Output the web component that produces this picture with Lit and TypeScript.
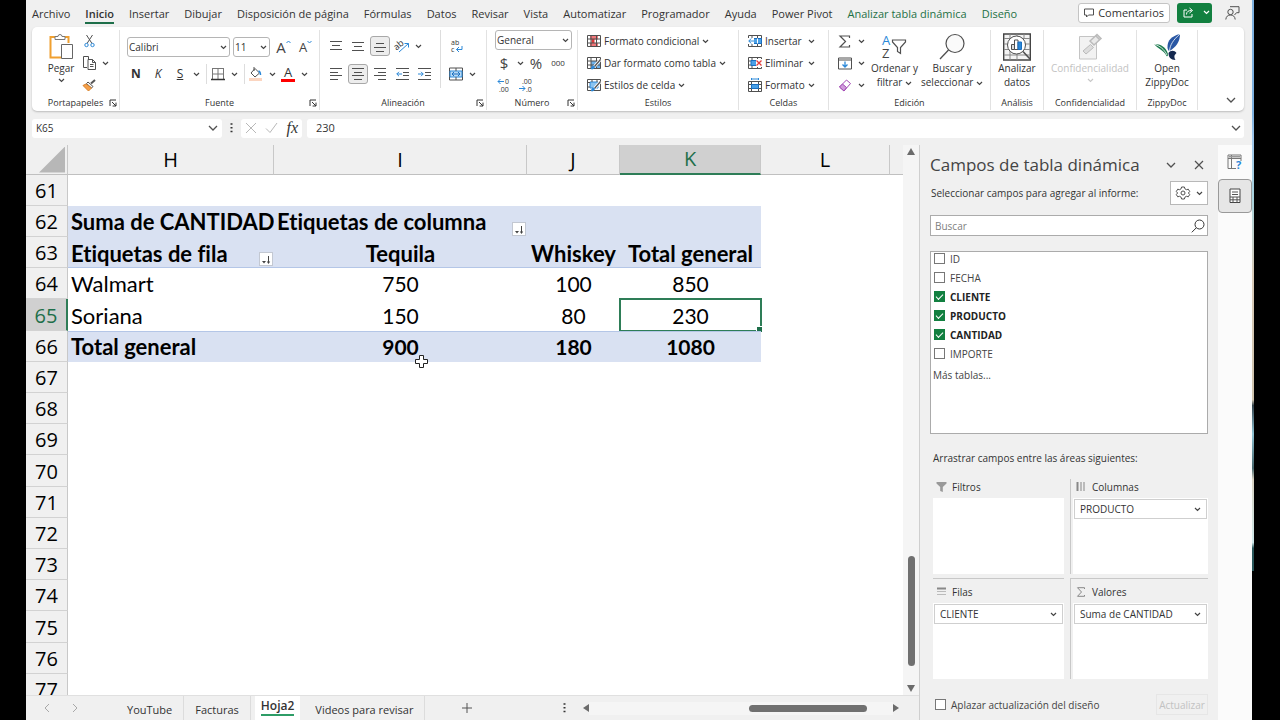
import { LitElement, html, svg, css, nothing } from "lit";
import { customElement, state } from "lit/decorators.js";
import { classMap } from "lit/directives/class-map.js";

const icon = (w: number, h: number, body: unknown) =>
  html`<svg class="icon" width=${w} height=${h} viewBox="0 0 ${w} ${h}" fill="none" stroke="#505050" stroke-width="1" aria-hidden="true">${body}</svg>`;

const chevron = (extra = "") =>
  html`<svg class="chev ${extra}" width="7" height="5" viewBox="0 0 7 5" fill="none" stroke="#444" stroke-width="1.2" aria-hidden="true"><path d="M1 1l2.500 2.500L6 1" /></svg>`;
const chev = chevron();
const wideChev = icon(10, 6, svg`<path d="M1 1l4 4 4-4" stroke-width="1.3" />`);
const launcher = icon(8, 8, svg`<path d="M1 7V1h6M3 3l4 4M7 3.600V7H3.600" stroke="#333" />`);

const lines = (rows: Array<[number, number, number]>) =>
  svg`${rows.map(([x1, x2, y]) => svg`<path d="M${x1} ${y}H${x2}" />`)}`;

const gridLines = svg`<path d="M.5 1.500h13v11H.5zM.5 5h13M.5 9h13M4 1.500v11M9.500 1.500v11" />`;

const I = {
  paste: icon(26, 28, svg`<path d="M7 4H2.500v20.500H13" stroke="#f0a030" stroke-width="2"/><path d="M17 4h3.500v6" stroke="#f0a030" stroke-width="2"/><path d="M7 6.500V3.500h3a2 2 0 0 1 4 0h3v3z" stroke="#777" fill="#fff"/><path d="M13.500 11.500h11v14h-11z" stroke="#666" fill="#fff"/>`),
  cut: icon(11, 14, svg`<path d="M2.500 1l5.500 8.500M8.500 1L3 9.500" /><circle cx="2.500" cy="11" r="1.700" stroke="#2b88d8"/><circle cx="8.500" cy="11" r="1.700" stroke="#2b88d8"/>`),
  copy: icon(15, 14, svg`<path d="M5 11.500H1.500v-11h5V3" /><path d="M6 3.500h4.500l3 3v7H6z" fill="#fff"/><path d="M10.500 3.500v3h3M8 8.500h3.500M8 10.500h3.500"/>`),
  painter: icon(14, 13, svg`<path d="M13 1L9 4.500" stroke="#555" stroke-width="2"/><path d="M6 3l5 4.500-1.500 1.500L4.500 4.500z" fill="#fff"/><path d="M4 5L1 6.500 6.500 12l3-3z" fill="#f5a04a" stroke="#d9822b"/>`),
  borders: icon(14, 14, svg`<path d="M1 1.500h12M1 7h12M1.500 1v11M7 1v11M12.500 1v11" stroke="#777"/><path d="M0 12.500h14" stroke="#333" stroke-width="1.500"/>`),
  fill: icon(14, 14, svg`<path d="M6 1.500L10.500 6 6 10 2 6zM5 0v4" /><path d="M9.500 4c2 .5 2 2 2 4" stroke="#2b88d8" stroke-width="1.500"/><path d="M0 12.500h13" stroke="#fbd5c0" stroke-width="3"/>`),
  caretUp: svg`<path d="M.5 3l2-2 2 2" />`,
  caretDown: svg`<path d="M.5 1l2 2 2-2" />`,
  top: icon(12, 10, lines([[0, 12, 0.5], [2, 10, 4.5], [0, 12, 8.5]])),
  mid: icon(12, 10, lines([[0, 12, 1.5], [2, 10, 5.5], [0, 12, 9.5]])),
  bottom: icon(12, 12, lines([[2, 10, 3.5], [0, 12, 7.5], [2, 10, 11.5]])),
  left: icon(12, 12, lines([[0, 12, 0.5], [0, 8, 4.5], [0, 12, 7.5], [0, 8, 11.5]])),
  center: icon(12, 12, lines([[0, 12, 0.5], [2, 10, 4.5], [0, 12, 7.5], [2, 10, 11.5]])),
  right: icon(12, 12, lines([[0, 12, 0.5], [4, 12, 4.5], [0, 12, 7.5], [4, 12, 11.5]])),
  outdent: icon(13, 12, svg`${lines([[0, 13, 0.5], [7, 13, 4.5], [7, 13, 7.5], [0, 13, 11.5]])}<path d="M6 6H.8M3 3.800L.8 6 3 8.200" stroke="#2b88d8" />`),
  indent: icon(13, 12, svg`${lines([[0, 13, 0.5], [7, 13, 4.5], [7, 13, 7.5], [0, 13, 11.5]])}<path d="M0 6h5.200M3 3.800L5.200 6 3 8.200" stroke="#2b88d8" />`),
  orient: icon(15, 14, svg`<text x="-1" y="9" class="tiny large" transform="rotate(-40 4 7)">ab</text><path d="M4 13L13.500 4.500M9.500 4.500h4v4" stroke="#2b88d8"/>`),
  wrap: icon(13, 14, svg`<text x="1" y="6" class="tiny">ab</text><text x="1" y="13" class="tiny">c</text><path d="M12 7v3.500H6.500M9 8l-2.500 2.500L9 13" stroke="#2b88d8"/>`),
  merge: icon(14, 14, svg`<path d="M.5 1h13v12H.5z"/><path d="M1 4h12v6H1z" fill="#b9d9f3" stroke="#2b88d8"/><path d="M3 7h8M5 5L3 7l2 2M9 5l2 2-2 2" stroke="#1a6fc0"/><path d="M7 1v3M7 10v3"/>`),
  lessDec: icon(14, 14, svg`<path d="M7 3.500H1M3.500 1L1 3.500 3.500 6" stroke="#2b88d8"/><text x="8" y="6" class="tiny">0</text><text x="2" y="14" class="tiny">.00</text>`),
  moreDec: icon(14, 14, svg`<text x="3" y="6" class="tiny">.00</text><path d="M0 10.500h6M3.500 8L6 10.500 3.500 13" stroke="#2b88d8"/><text x="7" y="14" class="tiny">.0</text>`),
  cond: icon(14, 14, svg`<path d="M3 1.500h8v4H3zM3 9h8v3.500H3z" fill="#f2777a" stroke="none"/><path d="M4.500 5h3v4h-3z" fill="#e23b3b" stroke="none"/>${gridLines}`),
  asTable: icon(14, 14, svg`<path d="M4 5h9.500v7.500H4z" fill="#6fb1e8" stroke="none"/>${gridLines}<path d="M13.500 3.500L7 11" stroke="#fff" stroke-width="3"/><path d="M13.500 3.500L7.500 10.500" stroke="#555" stroke-width="1.300"/><path d="M4.500 13c0-2 1-3 2.500-3 1 1.500-.5 3-2.500 3z" fill="#2b88d8" stroke="#2b88d8"/>`),
  cellStyle: icon(14, 14, svg`<path d="M.5 1.500h13v11H.5z"/><path d="M3 4h8v6H3z" fill="#8cc4f0" stroke="#2b88d8"/><path d="M.5 4.500H3M.5 9H3M5 1.500V4M10 1.500V4"/><path d="M13.500 3.500L7 11" stroke="#fff" stroke-width="3"/><path d="M13.500 3.500L7.500 10.500" stroke="#555" stroke-width="1.300"/><path d="M4.500 13c0-2 1-3 2.500-3 1 1.500-.5 3-2.500 3z" fill="#2b88d8" stroke="#2b88d8"/>`),
  insert: icon(14, 14, svg`${gridLines}<path d="M5 4.500h8.500v5H5z" fill="#4aa0e6" stroke="#1a6fc0"/><path d="M9.500 4.500v5" stroke="#fff"/><path d="M0 4h6v6H0z" fill="#fff" stroke="none"/><path d="M6 7H.8M3.200 4.500L.8 7l2.400 2.500" stroke="#2b88d8"/>`),
  del: icon(14, 14, svg`${gridLines}<path d="M3 4.500h6v5H3z" fill="#4aa0e6" stroke="#1a6fc0"/><path d="M8 3h6v8H8z" fill="#fff" stroke="none"/><path d="M8.500 4.500l5 5M13.500 4.500l-5 5" stroke="#e23b3b" stroke-width="1.300"/>`),
  format: icon(14, 14, svg`<path d="M.5 3.500h13v10H.5zM.5 6.500h13M.5 10.500h13M3.500 3.500v10M10.500 3.500v10"/><path d="M3.500 6.500h7v4h-7z" fill="#4aa0e6" stroke="#1a6fc0"/><path d="M3.500 1h7M3.500 0v2M10.500 0v2" stroke="#2b88d8"/>`),
  sum: icon(14, 13, svg`<path d="M11.500 3V1H2L7.500 6.500 2 12h9.500v-2" stroke-width="1.200"/>`),
  fillDown: icon(14, 13, svg`<path d="M.5 1h13v11H.5zM.5 3h13"/><path d="M7 4.500v5.500M4.500 7.500L7 10l2.500-2.500" stroke="#2b88d8" stroke-width="1.300"/>`),
  erase: icon(14, 13, svg`<path d="M8.500 1l4 3.500-6.500 7.500-4.500-4z" stroke="#a349b5" fill="#fff"/><path d="M4.500 5L8.500 8.500 6 12 1.500 8z" stroke="#a349b5" fill="#cf9bdb"/>`),
  sort: icon(26, 28, svg`<text x="1" y="12" class="az blue">A</text><text x="1" y="25" class="az">Z</text><path d="M11.500 7h13v2l-5 5.500v6l-3-2v-4l-5-5.500z" stroke-width="1.200"/>`),
  find: icon(26, 28, svg`<circle cx="16" cy="10.500" r="9" fill="#fafafa" stroke-width="1.200"/><path d="M9.500 17L1 26" stroke-width="1.300"/>`),
  analyze: icon(28, 28, svg`<path d="M.7 1h26.600v26H.7z" stroke="#444" stroke-width="1.400" fill="#f4f4f4"/><path d="M1 5.500h26M1 11h26M1 16.500h26M1 22h26M7 16v11M14 20v7M21 1v4M7 1v4M14 1v4" stroke="#888"/><circle cx="13.500" cy="12" r="9" fill="#fff"/><path d="M20 18.500L27 26" stroke-width="1.600"/><path d="M8.500 11.500h3v5h-3z" fill="#ddd"/><path d="M11.500 7h3.500v9.500h-3.500z" fill="#fff"/><path d="M15 9h3.500v7.500H15z" fill="#2b88d8" stroke="#1a6fc0"/>`),
  confid: icon(26, 28, svg`<path d="M2.500 3.500H19.500v22.500H2.500z" stroke="#c4c4c4" fill="#f2f2f2"/><path d="M6 18l7.500-6.500 3 3L9 21z" fill="#ddd" stroke="#bbb"/><path d="M13 8l7-6.500 4 4-7 6.500zM19 3l3.500 3.500" stroke="#bbb" fill="#e9e9e9" stroke-width="1.500"/>`),
  zippy: icon(28, 28, svg`<path d="M27 1C19 3 14 7 14.500 15c.5 2 1 3 2 3C23 14 27 9 27 1z" fill="#2957a4" stroke="none"/><path d="M16.500 18C17 12 20 7 27 1" stroke="#fff" stroke-width=".8"/><path d="M1 11c7 0 12 3 14 10 0 2-.5 2.500-1.500 2C11 17 6 17 1 11z" fill="#1e7c50" stroke="none"/><path d="M1 11c6 2 10 5 13 11" stroke="#fff" stroke-width=".8"/><path d="M15.500 20c2-3 6-3 8 0-2 2-3 3-1 7-5 0-7-3-7-7z" fill="#14284f" stroke="none"/>`),
  comment: icon(10, 10, svg`<path d="M.5 1h9v6H4.500l-2 2V7h-2z"/>`),
  share: icon(12, 11, svg`<path d="M4 3H1v7h8V7M3.500 7.500c0-3 2-4 5-4M6.500 1L9.500 3.500 6.500 6" stroke="#fff"/>`),
  person: icon(15, 14, svg`<path d="M5 .7h9v6h-2.500L9.500 9"/><circle cx="5.500" cy="6" r="2.700" fill="#f0f0f0"/><path d="M.8 13.500c.3-3 2-4.500 4.700-4.500s4.400 1.500 4.700 4.500"/>`),
  cancel: icon(12, 12, svg`<path d="M1 1l10 10M11 1L1 11" stroke="#b8b8b8"/>`),
  accept: icon(13, 12, svg`<path d="M1 6.500l4 4L12 1" stroke="#b8b8b8"/>`),
  dots: icon(3, 10, svg`<path d="M.5 1h2M.5 4.800h2M.5 8.500h2" stroke="#333" stroke-width="1.500"/>`),
  close: icon(10, 10, svg`<path d="M1 1l8 8M9 1L1 9" stroke-width="1.200"/>`),
  gear: icon(14, 14, svg`<path d="M5.600 1h2.800l.5 1.800 1.600.9 1.800-.5 1.400 2.300L12.400 7l1.300 1.500-1.400 2.300-1.800-.5-1.600.9-.5 1.800H5.600l-.5-1.800-1.600-.9-1.800.5L.3 8.500 1.600 7 .3 5.500l1.400-2.300 1.800.5 1.600-.9z"/><circle cx="7" cy="7" r="2"/>`),
  search: icon(14, 14, svg`<circle cx="8.500" cy="5.500" r="4.500" stroke="#333"/><path d="M5.300 8.800L.8 13.300" stroke="#333"/>`),
  funnel: icon(11, 10, svg`<path d="M.5 0h10v1.500L6.800 5v5l-2.600-1V5L.5 1.500z" fill="#999" stroke="none"/>`),
  cols: icon(11, 10, svg`<path d="M1.500 0v9" stroke="#888" stroke-width="2"/><path d="M5 0v9M8 0v9" stroke="#bbb" stroke-width="2"/>`),
  rows: icon(11, 10, svg`<path d="M1 1.500h9" stroke="#888" stroke-width="2"/><path d="M1 4.500h9M1 7.500h9" stroke="#bbb"/>`),
  sigma: icon(11, 10, svg`<path d="M8.500 2V.7h-7L5.500 5l-4 4.300h7V8" stroke="#888"/>`),
  help: icon(16, 16, svg`<path d="M1 1h13v6M9 14.500H1V1M1 4.500h13M4.500 1v13" stroke="#777"/><path d="M2 2h11v1.500H2z" fill="#999" stroke="none"/><text x="9" y="15" class="q">?</text>`),
  fields: icon(12, 16, svg`<path d="M1 1h10v13.500H1z" stroke="#444" fill="#fff"/><path d="M3 4h6M3 6.500h6M1 9h10M1 11.800h10M4 9v5.500M8 9v5.500" stroke="#555"/>`),
  sorted: icon(11, 11, svg`<path d="M7.500 2v7" stroke="#444"/><path d="M5.800 7.500h3.400L7.500 10z M1 7h4L3 9.500z" fill="#444" stroke="none"/>`),
  up: icon(8, 7, svg`<path d="M4 0l4 7H0z" fill="#6b6b6b" stroke="none"/>`),
  down: icon(8, 7, svg`<path d="M4 7l4-7H0z" fill="#6b6b6b" stroke="none"/>`),
  prev: icon(6, 8, svg`<path d="M0 4l6-4v8z" fill="#6b6b6b" stroke="none"/>`),
  next: icon(6, 8, svg`<path d="M6 4L0 0v8z" fill="#6b6b6b" stroke="none"/>`),
  navL: icon(6, 10, svg`<path d="M5 1L1 5l4 4" stroke="#a8a8a8"/>`),
  navR: icon(6, 10, svg`<path d="M1 1l4 4-4 4" stroke="#a8a8a8"/>`),
  plus: icon(10, 10, svg`<path d="M5 0v10M0 5h10" stroke="#555"/>`),
  cursor: icon(13, 13, svg`<path d="M4.500.5h4v4h4v4h-4v4h-4v-4h-4v-4h4z" fill="#fff" stroke="#222"/>`),
};

const TABS = ["Archivo", "Inicio", "Insertar", "Dibujar", "Disposición de página", "Fórmulas", "Datos", "Revisar", "Vista", "Automatizar", "Programador", "Ayuda", "Power Pivot", "Analizar tabla dinámica", "Diseño"];

type Row = { n: number; kind?: string; cells?: string[] };
const ROWS: Row[] = [
  { n: 61 },
  { n: 62, kind: "head", cells: ["Suma de CANTIDAD", "Etiquetas de columna", "", ""] },
  { n: 63, kind: "head line", cells: ["Etiquetas de fila", "Tequila", "Whiskey", "Total general"] },
  { n: 64, cells: ["Walmart", "750", "100", "850"] },
  { n: 65, cells: ["Soriana", "150", "80", "230"] },
  { n: 66, kind: "head total", cells: ["Total general", "900", "180", "1080"] },
  ...Array.from({ length: 11 }, (_, i) => ({ n: 67 + i })),
];

@customElement("app-root")
export class AppRoot extends LitElement {
  @state() private tab = "Inicio";
  @state() private fields = [
    { name: "ID", on: false },
    { name: "FECHA", on: false },
    { name: "CLIENTE", on: true },
    { name: "PRODUCTO", on: true },
    { name: "CANTIDAD", on: true },
    { name: "IMPORTE", on: false },
  ];

  static styles = css`
    :host { display: block; font-family: "Open Sans", "Noto Sans", sans-serif; font-size: 11px; line-height: 14px; color: #333; }
    * { box-sizing: border-box; }
    button, input, select { font: inherit; color: inherit; margin: 0; padding: 0; border: 0; background: none; border-radius: 0; }
    select { appearance: none; text-overflow: ellipsis; }
    svg { display: block; flex: none; overflow: visible; }
    .tiny { font: 7px "Open Sans", sans-serif; fill: #333; stroke: none; }
    .tiny.large { font-size: 9px; }
    .az { font: 13px "Open Sans", sans-serif; fill: #444; stroke: none; }
    .az.blue { fill: #2b88d8; }
    .q { font: bold 11px "Open Sans", sans-serif; fill: #2b88d8; stroke: none; }
    .screen { height: 100vh; display: flex; background: #000; padding: 0 26px; overflow: hidden; }
    .app { flex: 1; min-width: 0; display: flex; flex-direction: column; background: #f0f0f0; }
    .edge { width: 2px; height: 571px; background: linear-gradient(#7fb2e0 0 20%, #9fc6ea 24%, #a9d3dc 35%, #d9cbb8 48%, #cfc4ae 70%, #33434c 71%, #8fc3d4 76%, #47676d 82%, #d8d2c2 84%, #cfe8ea 95%, #28565a 96%); }

    .top { flex: none; height: 27px; display: flex; align-items: center; justify-content: space-between; padding: 0 12px 0 6px; }
    .tabs { display: flex; gap: 15px; }
    .tab { height: 18px; margin-top: 2px; border-bottom: 2px solid transparent; white-space: nowrap; }
    .tab.on { font-weight: 600; border-color: #1e6f4a; }
    .tab.ctx { color: #1e7145; }
    .actions { display: flex; align-items: center; gap: 7px; margin-bottom: 2px; }
    .comments { display: flex; align-items: center; gap: 4px; height: 20px; padding: 0 5px; background: #fff; border: 1px solid #c4c4c4; border-radius: 3px; }
    .share { display: flex; align-items: center; gap: 8px; width: 35px; height: 20px; padding-left: 6px; background: #128040; border-radius: 3px; margin-right: 6px; }
    .share .chev { stroke: #fff; }

    .ribbon { flex: none; height: 84px; margin: 0 8px 0 6px; background: #fff; border-radius: 5px; box-shadow: 0 1px 2px #bbb; display: flex; }
    .group { flex: none; display: flex; flex-direction: column; border-right: 1px solid #e2e2e2; margin: 3px 0 1px; }
    .body { height: 66px; display: flex; }
    .caption { display: flex; align-items: center; justify-content: center; height: 14px; font-size: 9px; position: relative; white-space: nowrap; }
    .launch { position: absolute; right: 2px; top: 3px; }
    .w-clip { width: 88px; } .w-font { width: 200px; } .w-align { width: 167px; } .w-num { width: 91px; } .w-style { width: 161px; }
    .w-cells { width: 90px; } .w-edit { width: 162px; } .w-an { width: 53px; } .w-conf { width: 93px; } .w-zip { width: 61px; }
    .collapse { margin: auto 8px 8px auto; }
    .col { display: flex; flex-direction: column; }
    .row { display: flex; align-items: center; }
    .big { display: flex; flex-direction: column; align-items: center; font-size: 10px; line-height: 14px; padding-top: 3px; white-space: nowrap; }
    .big .chev { display: inline-block; margin-left: 3px; vertical-align: middle; }
    .big .chev.solo { margin: 3px 0 0; }
    .big.off { color: #c3c3c3; }
    .big.off .chev { stroke: #c8c8c8; }
    .big.fillw { width: 100%; }
    .paste { width: 34px; margin-left: 12px; }
    .tools { padding-top: 1px; gap: 2px; }
    .sortb { margin-left: 6px; }
    .findb { margin-left: 3px; }
    .b { display: flex; align-items: center; justify-content: center; width: 22px; height: 20px; }
    .b.on { background: #ededed; border: 1px solid #a8a8a8; border-radius: 3px; width: 20px; margin: 0 1px; }
    .c { display: flex; align-items: center; justify-content: center; width: 10px; height: 20px; }
    .combo { position: relative; display: block; height: 20px; }
    .combo select { width: 100%; height: 100%; border: 1px solid #b5b5b5; border-radius: 3px; padding: 0 12px 0 1px; font-size: 10px; background: #fff; }
    .combo .chev { position: absolute; right: 3px; top: 8px; pointer-events: none; }
    .combo.name { width: 103px; } .combo.size { width: 37px; margin-left: 3px; } .combo.fmt { width: 77px; margin-bottom: 2px; }
    .vr { width: 1px; height: 20px; background: #ddd; margin-left: 5px; }
    .font { padding: 7px 0 0 7px; gap: 7px; }
    .second { margin-left: -2px; }
    .align { padding: 6px 0 0 5px; gap: 8px; }
    .wrapcol { padding: 6px 0 0 4px; margin-left: 5px; gap: 8px; border-left: 1px solid #ddd; height: 58px; }
    .num { padding: 0 0 0 8px; }
    .num .row { margin-left: -2px; height: 22px; }
    .list { padding: 1px 0 0 9px; gap: 2px; }
    .item { display: flex; align-items: center; gap: 3px; height: 20px; font-size: 10px; white-space: nowrap; }
    .item.fix { width: 67px; }
    .item.sym { gap: 6px; }
    .item .chev.end { margin-left: auto; }
    .glyph { font-size: 15px; color: #444; }
    .bold { font-weight: 700; font-size: 12px; } .ital { font-style: italic; font-size: 12px; } .under { text-decoration: underline; font-size: 12px; }
    .fontA { font-size: 15px; color: #444; position: relative; }
    .fontA.small { font-size: 13px; }
    .fontA svg { position: absolute; top: 0; right: -5px; }
    .fontcolor { font-size: 13px; line-height: 13px; border-bottom: 3px solid #f00; width: 14px; text-align: center; }
    .zeros { font-size: 8px; }

    .fbar { flex: none; display: flex; align-items: center; height: 34px; padding: 0 8px 0 6px; }
    .fbar > * { height: 19px; }
    .namebox { width: 190px; display: flex; align-items: center; background: #fff; border-radius: 3px; padding: 0 4px; }
    .namebox input { flex: 1; min-width: 0; font-size: 10px; }
    .fbar .grip { width: 19px; display: flex; align-items: center; justify-content: center; }
    .fx { width: 61px; background: #fff; border-radius: 3px; display: flex; align-items: center; justify-content: space-between; padding: 0 4px; font: italic 16px/18px "Liberation Serif", serif; }
    .formula { flex: 1; margin-left: 5px; background: #fff; border-radius: 3px; display: flex; align-items: center; padding: 0 3px 0 9px; }
    .formula input { flex: 1; min-width: 0; }

    .main { flex: 1; min-height: 0; display: flex; }
    .left { flex: 1; min-width: 0; display: flex; flex-direction: column; border-right: 1px solid #cfcfcf; }
    .view { flex: 1; min-height: 0; display: flex; }
    .sheet { flex: 1; min-width: 0; overflow: hidden; background: #fff; }
    table { border-collapse: separate; border-spacing: 0; table-layout: fixed; width: 100%; font: 22px/24px Lato, "Open Sans", sans-serif; font-variant-ligatures: none; color: #000; }
    .c0 { width: 42px; } .cH { width: 206px; } .cI { width: 253px; } .cJ { width: 93px; } .cK { width: 141px; } .cL { width: 129px; }
    th, td { padding: 0; height: 31px; text-align: center; white-space: nowrap; font-weight: 400; }
    thead th { height: 30px; background: #f0f0f0; border-right: 1px solid #c8c8c8; border-bottom: 1px solid #c0c0c0; font-family: "Open Sans", sans-serif; font-size: 20px; }
    thead th:last-child { border-right: 0; }
    thead th.sel { background: #d0d0d0; color: #1e6f4a; border-bottom: 2px solid #2e7d57; }
    .corner { display: block; width: 26px; height: 26px; margin-left: auto; margin-right: 2px; background: #b7b7b7; clip-path: polygon(100% 0, 100% 100%, 0 100%); }
    tbody th { background: #f0f0f0; border-right: 1px solid #c8c8c8; border-bottom: 1px solid #d2d2d2; font-family: "Open Sans", sans-serif; font-size: 20px; padding-top: 2px; }
    tbody tr:nth-child(5n) > * { height: 32px; }
    tbody th.sel { background: #d0d0d0; color: #1e6f4a; border-right: 2px solid #2e7d57; }
    td { position: relative; padding-top: 1px; }
    td.txt { text-align: left; padding-left: 3px; }
    td.numeric { font-size: 21px; }
    .head td { font-weight: 700; }
    .head td:not(.rest) { background: #d9e1f2; }
    .line td:not(.rest) { border-bottom: 1px solid #b4c6e7; padding-top: 3px; }
    .total td:not(.rest) { border-top: 1px solid #b4c6e7; padding-top: 0; }
    td.cell { outline: 2px solid #2e7d57; outline-offset: -1px; }
    td.cell::after { content: ""; position: absolute; right: -2px; bottom: -2px; width: 5px; height: 5px; background: #1e6f4a; border: 1px solid #fff; }
    .sortbtn { position: absolute; right: 1px; bottom: 1px; width: 14px; height: 14px; background: #fff; border: 1px solid #c3c8d2; display: flex; align-items: center; justify-content: center; }
    .cursor { position: absolute; left: 141px; top: 23px; z-index: 1; }
    .vscroll { width: 16px; background: #f5f5f5; display: flex; flex-direction: column; align-items: center; padding: 3px 0; }
    .vthumb { width: 7px; height: 110px; border-radius: 4px; background: #707070; margin: auto 0 19px; }
    .bottom { flex: none; height: 25px; display: flex; align-items: center; border-top: 1px solid #e0e0e0; }
    .nav { display: flex; gap: 22px; padding: 0 38px 0 18px; }
    .nav button { display: flex; }
    .stab { height: 24px; padding: 4px 11px 0; border-right: 1px solid #dcdcdc; line-height: 16px; white-space: nowrap; font-size: 11px; }
    .stab.on { background: #fff; font-size: 12px; font-weight: 600; padding: 0 6px 2px; border: 0; margin: 0 4px; }
    .stab.on span { display: block; border-bottom: 2px solid #2e9d67; }
    .plus { margin-left: 37px; }
    .hscroll { margin-left: auto; display: flex; align-items: center; padding-right: 20px; }
    .hscroll .more { margin-right: 17px; }
    .track { width: 304px; height: 13px; background: #f5f5f5; display: flex; align-items: center; justify-content: flex-end; padding-right: 26px; }
    .hthumb { width: 118px; height: 7px; border-radius: 4px; background: #707070; }

    .pane { width: 298px; flex: none; padding: 8px 10px 0 10px; display: flex; flex-direction: column; }
    .title { display: flex; align-items: center; height: 24px; }
    .title h2 { margin: 0; flex: 1; font-weight: 400; font-size: 17px; line-height: 24px; color: #444; white-space: nowrap; }
    .title button { margin-right: 4px; margin-left: 14px; }
    .choose { display: flex; align-items: center; justify-content: space-between; margin-top: 3px; height: 26px; white-space: nowrap; font-size: 10px; padding-left: 1px; }
    .gear { display: flex; align-items: center; justify-content: center; gap: 6px; width: 38px; height: 24px; background: #fff; border: 1px solid #b8b8b8; }
    .searchbox { margin-top: 9px; height: 21px; background: #fff; border: 1px solid #ababab; display: flex; align-items: center; padding: 0 2px 0 4px; }
    .searchbox input { flex: 1; min-width: 0; font-size: 10px; }
    .searchbox input::placeholder { color: #808080; }
    .fields { margin-top: 15px; height: 183px; background: #fff; border: 1px solid #ababab; padding-left: 3px; font-size: 10px; }
    .check { display: flex; align-items: center; gap: 5px; height: 19px; color: #444; }
    .fields .check:first-child { margin-top: -3px; }
    .check.on { font-weight: 700; color: #222; }
    .check input { appearance: none; width: 11px; height: 11px; border: 1px solid #777; background: #fff; display: grid; place-items: center; }
    .check input:checked { background: #128040; border-color: #128040; }
    .check input:checked::after { content: ""; width: 6px; height: 3px; margin-top: -2px; border: solid #fff; border-width: 0 0 1px 1px; transform: rotate(-45deg); }
    .moretables { display: block; margin: 3px 0 0 -1px; color: #444; text-decoration: none; line-height: 18px; }
    .drag { margin: 15px 0 0 3px; font-size: 10px; line-height: 18px; }
    .areas { margin: 12px 0 0 3px; display: grid; grid-template-columns: 131fr 137fr; column-gap: 7px; row-gap: 4px; }
    .area { display: flex; flex-direction: column; }
    .area:nth-child(even) { border-left: 1px solid #c8c8c8; padding-left: 2px; margin-left: -1px; }
    .area:nth-child(n + 3) { border-top: 1px solid #c8c8c8; }
    .area h3 { margin: 0; height: 19px; display: flex; align-items: center; gap: 5px; font-weight: 400; font-size: 10px; padding: 0 0 3px 3px; }
    .area:nth-child(n + 3) h3 { height: 24px; padding: 4px 0 2px 3px; }
    .box { height: 76px; background: #fff; }
    .area .combo { margin: 1px 1px 0; }
    .area .combo select { border: 1px solid #cfcfcf; border-radius: 0; padding-left: 5px; }
    .area .combo .chev { right: 6px; }
    .foot { margin-top: 15px; display: flex; align-items: center; justify-content: space-between; padding-left: 5px; font-size: 10px; }
    .update { width: 52px; height: 21px; border: 1px solid #e6e6e6; color: #c2c2c2; white-space: nowrap; }
    .rail { width: 34px; flex: none; background: #fbfbfb; }
    .rail button { display: flex; align-items: center; justify-content: center; width: 34px; height: 34px; }
    .rail .on { background: #e6e6e6; border: 1px solid #999; border-radius: 4px; }
  `;

  private group(name: string, width: string, body: unknown, launch = false) {
    return html`<section class="group ${width}" aria-label=${name}>
      <div class="body">${body}</div>
      <div class="caption">${name}${launch ? html`<button class="launch" aria-label="Opciones de ${name}">${launcher}</button>` : nothing}</div>
    </section>`;
  }

  private btn(label: string, content: unknown, on = false) {
    return html`<button class=${classMap({ b: true, on })} aria-label=${label} title=${label}>${content}</button>`;
  }

  private more(label: string) {
    return html`<button class="c" aria-label="Más: ${label}">${chev}</button>`;
  }

  private combo(kind: string, label: string, value: string) {
    return html`<label class="combo ${kind}"><select aria-label=${label}><option>${value}</option></select>${chev}</label>`;
  }

  private sizeLetter(kind: string, caret: unknown) {
    return html`<span class="fontA ${kind}">A<svg width="5" height="4" viewBox="0 0 5 4" fill="none" stroke="#2b88d8">${caret}</svg></span>`;
  }

  private ribbon() {
    return html`<div class="ribbon">
      ${this.group("Portapapeles", "w-clip", html`
        <button class="big paste">${I.paste}Pegar${chevron("solo")}</button>
        <div class="col tools">
          ${this.btn("Cortar", I.cut)}
          <div class="row">${this.btn("Copiar", I.copy)}${this.more("Copiar")}</div>
          ${this.btn("Copiar formato", I.painter)}
        </div>`, true)}
      ${this.group("Fuente", "w-font", html`<div class="col font">
        <div class="row">${this.combo("name", "Fuente", "Calibri")}${this.combo("size", "Tamaño", "11")}
          ${this.btn("Aumentar", this.sizeLetter("", I.caretUp))}${this.btn("Disminuir", this.sizeLetter("small", I.caretDown))}</div>
        <div class="row second">${this.btn("Negrita", html`<span class="bold">N</span>`)}${this.btn("Cursiva", html`<span class="ital">K</span>`)}${this.btn("Subrayado", html`<span class="under">S</span>`)}${this.more("Subrayado")}
          <span class="vr"></span>${this.btn("Bordes", I.borders)}${this.more("Bordes")}<span class="vr"></span>
          ${this.btn("Relleno", I.fill)}${this.more("Relleno")}${this.btn("Color", html`<span class="fontcolor">A</span>`)}${this.more("Color")}</div>
      </div>`, true)}
      ${this.group("Alineación", "w-align", html`<div class="col align">
        <div class="row">${this.btn("Arriba", I.top)}${this.btn("Medio", I.mid)}${this.btn("Abajo", I.bottom, true)}${this.btn("Orientación", I.orient)}${this.more("Orientación")}</div>
        <div class="row">${this.btn("Izquierda", I.left)}${this.btn("Centrar", I.center, true)}${this.btn("Derecha", I.right)}${this.btn("Disminuir sangría", I.outdent)}${this.btn("Aumentar sangría", I.indent)}</div>
      </div>
      <div class="col wrapcol">${this.btn("Ajustar texto", I.wrap)}<div class="row">${this.btn("Combinar", I.merge)}${this.more("Combinar")}</div></div>`, true)}
      ${this.group("Número", "w-num", html`<div class="col num">
        ${this.combo("fmt", "Formato de número", "General")}
        <div class="row">${this.btn("Moneda", html`<span class="glyph">$</span>`)}${this.more("Moneda")}${this.btn("Porcentaje", html`<span class="glyph">%</span>`)}${this.btn("Millares", html`<span class="zeros">000</span>`)}</div>
        <div class="row">${this.btn("Más decimales", I.lessDec)}${this.btn("Menos decimales", I.moreDec)}</div>
      </div>`, true)}
      ${this.group("Estilos", "w-style", html`<div class="col list">
        <button class="item">${I.cond}Formato condicional${chev}</button>
        <button class="item">${I.asTable}Dar formato como tabla${chev}</button>
        <button class="item">${I.cellStyle}Estilos de celda${chev}</button></div>`)}
      ${this.group("Celdas", "w-cells", html`<div class="col list">
        <button class="item fix">${I.insert}Insertar${chevron("end")}</button>
        <button class="item fix">${I.del}Eliminar${chevron("end")}</button>
        <button class="item fix">${I.format}Formato${chev}</button></div>`)}
      ${this.group("Edición", "w-edit", html`<div class="col list">
        <button class="item sym" aria-label="Autosuma">${I.sum}${chev}</button><button class="item sym" aria-label="Rellenar">${I.fillDown}${chev}</button><button class="item sym" aria-label="Borrar">${I.erase}${chev}</button></div>
        <button class="big sortb">${I.sort}<span>Ordenar y</span><span>filtrar${chev}</span></button>
        <button class="big findb">${I.find}<span>Buscar y</span><span>seleccionar${chev}</span></button>`)}
      ${this.group("Análisis", "w-an", html`<button class="big fillw">${I.analyze}<span>Analizar</span><span>datos</span></button>`)}
      ${this.group("Confidencialidad", "w-conf", html`<button class="big fillw off" disabled>${I.confid}<span>Confidencialidad</span>${chevron("solo")}</button>`)}
      ${this.group("ZippyDoc", "w-zip", html`<button class="big fillw">${I.zippy}<span>Open</span><span>ZippyDoc</span></button>`)}
      <button class="collapse" aria-label="Contraer la cinta">${wideChev}</button>
    </div>`;
  }

  private row(r: Row) {
    const sel = r.n === 65;
    return html`<tr class=${r.kind ?? ""}>
      <th scope="row" class=${sel ? "sel" : ""}>${r.n}</th>
      ${[0, 1, 2, 3].map((i) => html`<td class=${classMap({ txt: i === 0 || (r.n === 62 && i === 1), numeric: /^\d+$/.test(r.cells?.[i] ?? ""), cell: sel && i === 3 })}>${r.cells?.[i] ?? ""}${
        (r.n === 62 && i === 1) || (r.n === 63 && i === 0) ? html`<button class="sortbtn" aria-label="Ordenado">${I.sorted}</button>` : nothing}${
        r.n === 66 && i === 1 ? html`<span class="cursor">${I.cursor}</span>` : nothing}</td>`)}
      <td class="rest"></td><td class="rest"></td>
    </tr>`;
  }

  private area(name: string, ic: unknown, value?: string) {
    return html`<div class="area"><h3>${ic}${name}</h3><div class="box">${value ? this.combo("field", name, value) : nothing}</div></div>`;
  }

  private toggle(i: number) {
    this.fields = this.fields.map((f, k) => (k === i ? { ...f, on: !f.on } : f));
  }

  render() {
    return html`<div class="screen"><div class="app">
      <header class="top">
        <nav class="tabs">${TABS.map((t, i) => html`<button class=${classMap({ tab: true, on: t === this.tab, ctx: i > 12 })} @click=${() => (this.tab = t)}>${t}</button>`)}</nav>
        <div class="actions"><button class="comments">${I.comment}Comentarios</button><button class="share" aria-label="Compartir">${I.share}${chev}</button><button aria-label="Cuenta">${I.person}</button></div>
      </header>
      ${this.ribbon()}
      <div class="fbar">
        <div class="namebox"><input aria-label="Cuadro de nombres" .value=${"K65"} /><button aria-label="Nombres">${wideChev}</button></div>
        <span class="grip">${I.dots}</span>
        <div class="fx"><button aria-label="Cancelar">${I.cancel}</button><button aria-label="Introducir">${I.accept}</button><button aria-label="Insertar función">fx</button></div>
        <div class="formula"><input aria-label="Barra de fórmulas" .value=${"230"} /><button aria-label="Expandir">${wideChev}</button></div>
      </div>
      <main class="main">
        <div class="left">
          <div class="view">
            <div class="sheet"><table>
              <colgroup><col class="c0" /><col class="cH" /><col class="cI" /><col class="cJ" /><col class="cK" /><col class="cL" /><col /></colgroup>
              <thead><tr><th><span class="corner"></span></th>${["H", "I", "J", "K", "L", ""].map((c) => html`<th scope="col" class=${c === "K" ? "sel" : ""}>${c}</th>`)}</tr></thead>
              <tbody>${ROWS.map((r) => this.row(r))}</tbody>
            </table></div>
            <div class="vscroll">${I.up}<div class="vthumb"></div>${I.down}</div>
          </div>
          <footer class="bottom">
            <div class="nav"><button aria-label="Anterior">${I.navL}</button><button aria-label="Siguiente">${I.navR}</button></div>
            <button class="stab">YouTube</button><button class="stab">Facturas</button><button class="stab on"><span>Hoja2</span></button><button class="stab">Videos para revisar</button>
            <button class="plus" aria-label="Hoja nueva">${I.plus}</button>
            <div class="hscroll"><span class="more">${I.dots}</span>${I.prev}<div class="track"><div class="hthumb"></div></div>${I.next}</div>
          </footer>
        </div>
        <aside class="pane">
          <div class="title"><h2>Campos de tabla dinámica</h2><button aria-label="Opciones">${wideChev}</button><button aria-label="Cerrar">${I.close}</button></div>
          <div class="choose"><span>Seleccionar campos para agregar al informe:</span><button class="gear" aria-label="Herramientas">${I.gear}${chev}</button></div>
          <div class="searchbox"><input type="text" placeholder="Buscar" aria-label="Buscar" />${I.search}</div>
          <div class="fields">
            ${this.fields.map((f, i) => html`<label class=${classMap({ check: true, on: f.on })}><input type="checkbox" .checked=${f.on} @change=${() => this.toggle(i)} />${f.name}</label>`)}
            <a class="moretables" href="#">Más tablas...</a>
          </div>
          <div class="drag">Arrastrar campos entre las áreas siguientes:</div>
          <div class="areas">
            ${this.area("Filtros", I.funnel)}${this.area("Columnas", I.cols, "PRODUCTO")}
            ${this.area("Filas", I.rows, "CLIENTE")}${this.area("Valores", I.sigma, "Suma de CANTIDAD")}
          </div>
          <div class="foot"><label class="check"><input type="checkbox" />Aplazar actualización del diseño</label><button class="update" disabled>Actualizar</button></div>
        </aside>
        <div class="rail"><button aria-label="Ayuda de campos">${I.help}</button><button class="on" aria-label="Campos">${I.fields}</button></div>
      </main>
    </div><div class="edge"></div></div>`;
  }
}
